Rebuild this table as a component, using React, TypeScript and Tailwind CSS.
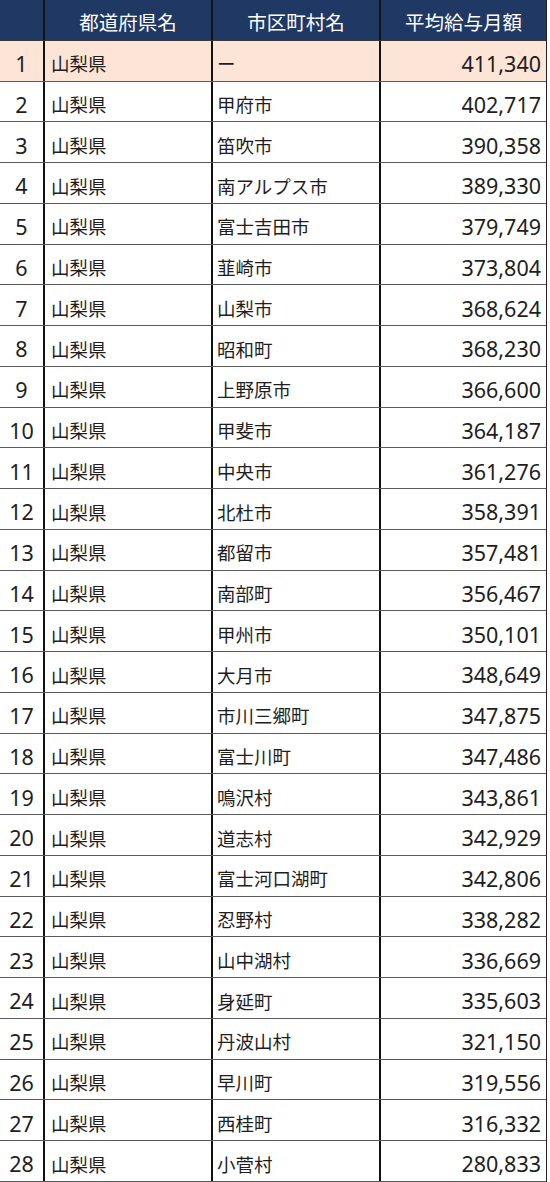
import React from "react";

const rows: [string, string][] = [
  ["ー", "411,340"],
  ["甲府市", "402,717"],
  ["笛吹市", "390,358"],
  ["南アルプス市", "389,330"],
  ["富士吉田市", "379,749"],
  ["韮崎市", "373,804"],
  ["山梨市", "368,624"],
  ["昭和町", "368,230"],
  ["上野原市", "366,600"],
  ["甲斐市", "364,187"],
  ["中央市", "361,276"],
  ["北杜市", "358,391"],
  ["都留市", "357,481"],
  ["南部町", "356,467"],
  ["甲州市", "350,101"],
  ["大月市", "348,649"],
  ["市川三郷町", "347,875"],
  ["富士川町", "347,486"],
  ["鳴沢村", "343,861"],
  ["道志村", "342,929"],
  ["富士河口湖町", "342,806"],
  ["忍野村", "338,282"],
  ["山中湖村", "336,669"],
  ["身延町", "335,603"],
  ["丹波山村", "321,150"],
  ["早川町", "319,556"],
  ["西桂町", "316,332"],
  ["小菅村", "280,833"],
];

export default function App() {
  return (
    <div className="w-[550px] h-[1182px] bg-white overflow-hidden">
      <div className="w-[547px] h-[1182px] grid grid-rows-[repeat(29,minmax(0,1fr))] border-r border-[#222]">
        <div className="grid grid-cols-[45px_168px_168px_165px] bg-[#203864] text-white border-b border-[#3a3a3a] font-['Noto_Sans_CJK_JP','Noto_Sans',sans-serif] text-[19.5px]">
          <div className="border-r-2 border-[#111]" />
          <div className="border-r-2 border-[#111] flex items-center justify-center pt-[4px]">都道府県名</div>
          <div className="border-r-2 border-[#111] flex items-center justify-center pt-[4px]">市区町村名</div>
          <div className="flex items-center justify-center pt-[4px]">平均給与月額</div>
        </div>
        {rows.map(([city, val], i) => (
          <div
            key={i}
            className={
              i === 0
                ? "grid grid-cols-[45px_168px_168px_165px] border-b border-[#5a5a5a] text-[#1e1e1e] bg-[#fce4d6]"
                : "grid grid-cols-[45px_168px_168px_165px] border-b border-[#5a5a5a] text-[#1e1e1e] bg-white"
            }
          >
            <div className="border-r-2 border-[#111] flex items-center justify-center pt-[7px] text-[21.5px] font-['Noto_Sans','Noto_Sans_CJK_JP',sans-serif]">
              {i + 1}
            </div>
            <div className="border-r-2 border-[#111] flex items-center pl-[6px] pt-[7px] text-[18.5px] font-['Noto_Sans_CJK_JP','Noto_Sans',sans-serif]">
              山梨県
            </div>
            <div className="border-r-2 border-[#111] flex items-center pl-[4px] pt-[7px] text-[18.5px] font-['Noto_Sans_CJK_JP','Noto_Sans',sans-serif]">
              {city}
            </div>
            <div className="flex items-center justify-end pr-[5px] pt-[7px] text-[21.5px] font-['Noto_Sans','Noto_Sans_CJK_JP',sans-serif]">
              {val}
            </div>
          </div>
        ))}
      </div>
    </div>
  );
}
